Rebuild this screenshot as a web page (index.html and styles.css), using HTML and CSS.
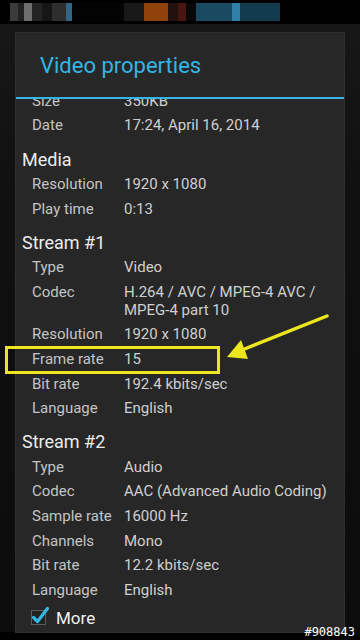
FILE: index.html
```html
<!DOCTYPE html>
<html lang="en">
<head>
  <meta charset="UTF-8">
  <meta name="viewport" content="width=device-width, initial-scale=1.0">
  <title>Video properties</title>
  <link rel="stylesheet" href="styles.css">
</head>
<body>
  <div class="statusbar">
    <span class="px" style="width:8px;background:#4a4a4a"></span>
    <span class="px" style="width:6px;background:#2a2a2a"></span>
    <span class="px" style="width:8px;background:#8a8a8a"></span>
    <span class="px" style="width:10px;background:#2c2c2c"></span>
    <span class="px" style="width:10px;background:#1c1c1c"></span>
    <span class="px" style="width:14px;background:#3a3a3a"></span>
    <span class="px" style="width:6px;background:#3f7fa8"></span>
    <span class="px" style="width:52px;background:#050505"></span>
    <span class="px" style="width:20px;background:#1e1e1e"></span>
    <span class="px" style="width:24px;background:#b5520e"></span>
    <span class="px" style="width:10px;background:#2a1510"></span>
    <span class="px" style="width:8px;background:#5a1a14"></span>
    <span class="px" style="width:10px;background:#0a0a0a"></span>
    <span class="px" style="width:36px;background:#1f5d7a"></span>
    <span class="px" style="width:8px;background:#3aa0d0"></span>
    <span class="px" style="width:40px;background:#184a62"></span>
  </div>

  <div class="screen">
    <div class="dialog">
      <div class="dialog-title">Video properties</div>
      <div class="dialog-body">
        <div class="props">
          <div class="row"><span class="label">Size</span><span class="value">350KB</span></div>
          <div class="row"><span class="label">Date</span><span class="value">17:24, April 16, 2014</span></div>

          <div class="heading">Media</div>
          <div class="row"><span class="label">Resolution</span><span class="value">1920 x 1080</span></div>
          <div class="row"><span class="label">Play time</span><span class="value">0:13</span></div>

          <div class="heading">Stream #1</div>
          <div class="row"><span class="label">Type</span><span class="value">Video</span></div>
          <div class="row"><span class="label">Codec</span><span class="value">H.264 / AVC / MPEG-4 AVC / MPEG-4 part 10</span></div>
          <div class="row"><span class="label">Resolution</span><span class="value">1920 x 1080</span></div>
          <div class="row"><span class="label">Frame rate</span><span class="value">15</span></div>
          <div class="row"><span class="label">Bit rate</span><span class="value">192.4 kbits/sec</span></div>
          <div class="row"><span class="label">Language</span><span class="value">English</span></div>

          <div class="heading">Stream #2</div>
          <div class="row"><span class="label">Type</span><span class="value">Audio</span></div>
          <div class="row"><span class="label">Codec</span><span class="value">AAC (Advanced Audio Coding)</span></div>
          <div class="row"><span class="label">Sample rate</span><span class="value">16000 Hz</span></div>
          <div class="row"><span class="label">Channels</span><span class="value">Mono</span></div>
          <div class="row"><span class="label">Bit rate</span><span class="value">12.2 kbits/sec</span></div>
          <div class="row"><span class="label">Language</span><span class="value">English</span></div>

          <label class="more">
            <svg class="check" width="20" height="20" viewBox="0 0 20 20">
              <rect x="1.5" y="4.5" width="14" height="14" fill="#222" stroke="#5c5c5c" stroke-width="1"/>
              <path d="M3.5 11.5 L7.5 15.5 L17.5 2.5" fill="none" stroke="#33b5e5" stroke-width="3.2" stroke-linecap="round" stroke-linejoin="round"/>
            </svg>
            <span>More</span>
          </label>
        </div>
      </div>
    </div>
  </div>

  <svg class="annotation" width="360" height="640" viewBox="0 0 360 640">
    <rect x="6.5" y="347.5" width="212" height="25" fill="none" stroke="#ebe61e" stroke-width="3"/>
    <line x1="327" y1="316" x2="242" y2="350" stroke="#ebe61e" stroke-width="3.5" stroke-linecap="round"/>
    <polygon points="227,357 241,340 248,359" fill="#ebe61e"/>
  </svg>

  <div class="watermark">#908843</div>
</body>
</html>
```

FILE: styles.css
```css
body {
  margin: 0;
  width: 360px;
  height: 640px;
  background: #000;
  font-family: Roboto, "Noto Sans", sans-serif;
  position: relative;
  overflow: hidden;
}
.statusbar {
  height: 24px;
  background: #000;
  display: flex;
  align-items: center;
  padding-left: 10px;
  box-sizing: border-box;
}
.px {
  display: inline-block;
  height: 18px;
  opacity: 0.8;
}
.screen {
  height: 608px;
  background: linear-gradient(#171717, #101010 30%, #0c0c0c);
  padding: 9px 16px 0;
  box-sizing: border-box;
}
.dialog {
  width: 328px;
  height: 599px;
  background: #272727;
  box-shadow: 0 0 0 1px #2f2f2f;
  display: flex;
  flex-direction: column;
}
.dialog-title {
  height: 64px;
  line-height: 66px;
  padding-left: 24px;
  font-size: 22px;
  color: #33b5e5;
  border-bottom: 2px solid #33b5e5;
  flex-shrink: 0;
}
.dialog-body {
  flex: 1;
  overflow: hidden;
}
.props {
  margin-top: -10.5px;
  padding-left: 6px;
}
.heading {
  font-size: 18px;
  color: #ececec;
  line-height: 24px;
  margin-top: 10px;
}
.row {
  display: flex;
  padding: 3.3px 0 3.3px 10px;
  font-size: 15px;
  line-height: 18px;
  color: #c4c4c4;
}
.label {
  width: 92px;
  flex-shrink: 0;
}
.value {
  flex: 1;
  padding-right: 10px;
  color: #cfcfcf;
}
.more {
  display: flex;
  align-items: center;
  height: 24px;
  margin-top: 4px;
  padding-left: 8px;
  font-size: 17px;
  color: #f0f0f0;
}
.check {
  margin-right: 6px;
  margin-top: -4px;
}
.annotation {
  position: absolute;
  top: 0;
  left: 0;
}
.watermark {
  position: absolute;
  right: 5px;
  bottom: 1px;
  font-family: "DejaVu Sans Mono", monospace;
  font-size: 12px;
  color: #fff;
}
```
